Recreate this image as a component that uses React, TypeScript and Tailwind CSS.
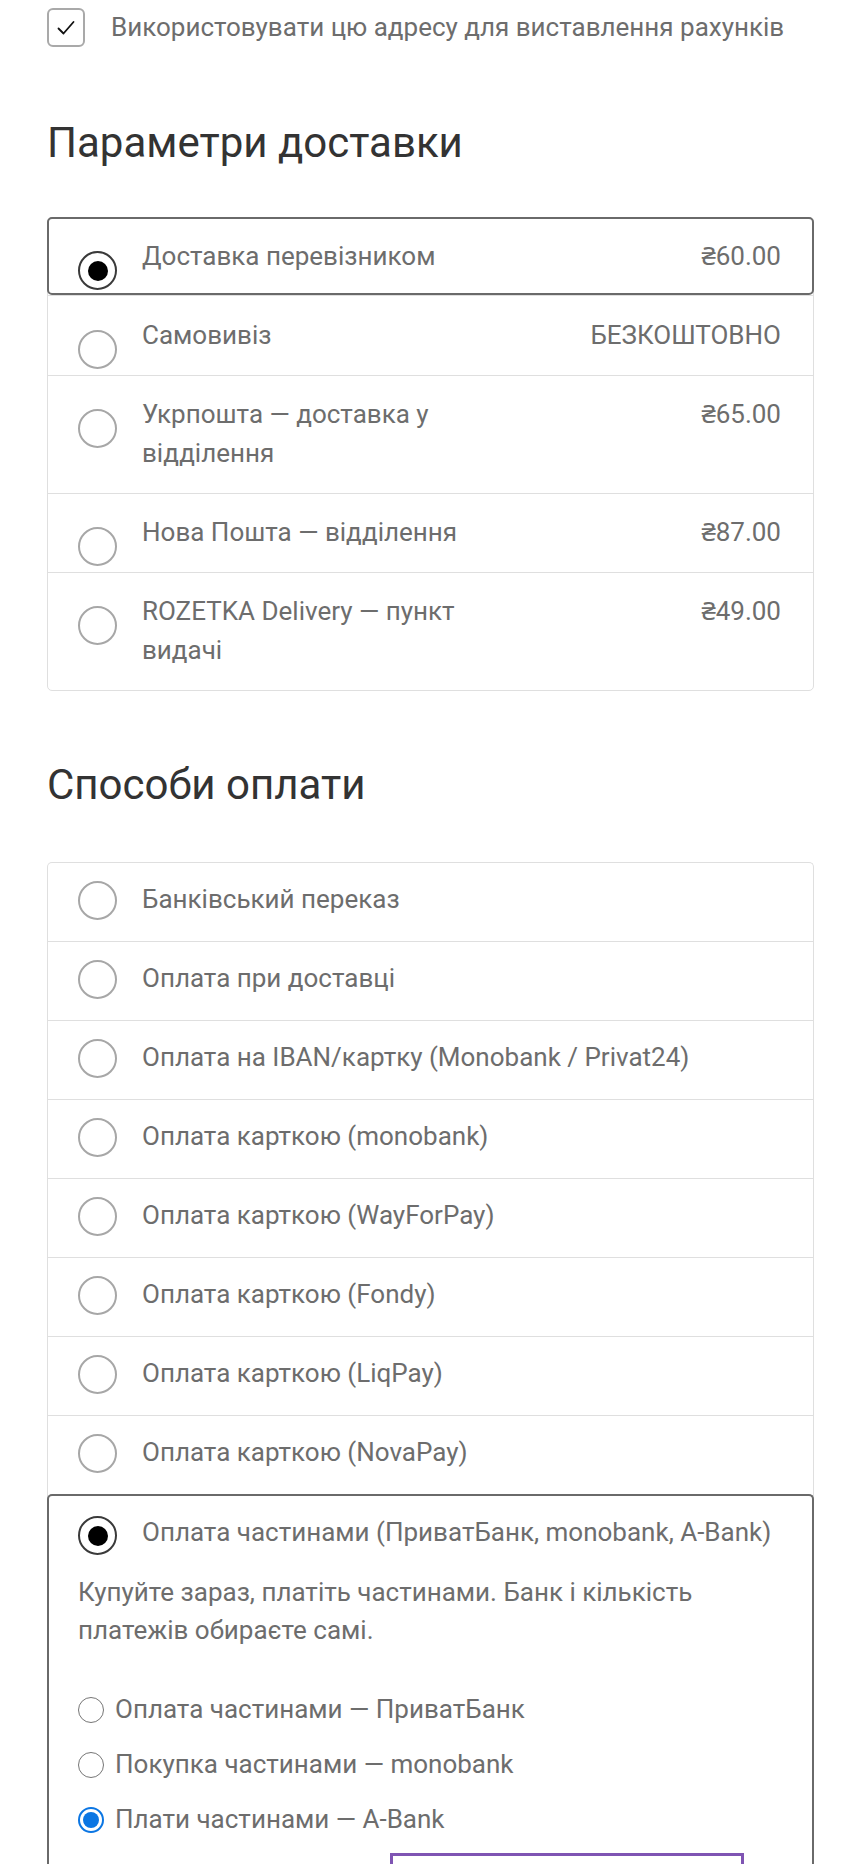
import type { ReactNode } from "react";

const font = { fontFamily: "Roboto, 'Noto Sans', sans-serif" };

interface ShippingOption {
  label: string;
  price: string;
  selected?: boolean;
}

const shipping: ShippingOption[] = [
  { label: "Доставка перевізником", price: "₴60.00", selected: true },
  { label: "Самовивіз", price: "БЕЗКОШТОВНО" },
  { label: "Укрпошта — доставка у відділення", price: "₴65.00" },
  { label: "Нова Пошта — відділення", price: "₴87.00" },
  { label: "ROZETKA Delivery — пункт видачі", price: "₴49.00" },
];

const payments = [
  "Банківський переказ",
  "Оплата при доставці",
  "Оплата на IBAN/картку (Monobank / Privat24)",
  "Оплата карткою (monobank)",
  "Оплата карткою (WayForPay)",
  "Оплата карткою (Fondy)",
  "Оплата карткою (LiqPay)",
  "Оплата карткою (NovaPay)",
];

const banks = [
  { label: "Оплата частинами — ПриватБанк", checked: false },
  { label: "Покупка частинами — monobank", checked: false },
  { label: "Плати частинами — A-Bank", checked: true },
];

function Radio({ checked, className = "" }: { checked?: boolean; className?: string }) {
  return checked ? (
    <span className={`flex h-[39px] w-[39px] shrink-0 items-center justify-center rounded-full border-2 border-[#3a3a3a] bg-white ${className}`}>
      <span className="h-[20px] w-[20px] rounded-full bg-black" />
    </span>
  ) : (
    <span className={`block h-[39px] w-[39px] shrink-0 rounded-full border-2 border-[#a7a7a7] bg-white ${className}`} />
  );
}

function SmallRadio({ checked }: { checked?: boolean }) {
  return checked ? (
    <span className="flex h-[26px] w-[26px] shrink-0 items-center justify-center rounded-full border-2 border-[#0b76e3] bg-white">
      <span className="h-[16px] w-[16px] rounded-full bg-[#0b76e3]" />
    </span>
  ) : (
    <span className="block h-[26px] w-[26px] shrink-0 rounded-full border-[1.5px] border-[#767676] bg-white" />
  );
}

function Heading({ children, className = "" }: { children: ReactNode; className?: string }) {
  return (
    <h2 className={`text-[42px] leading-[50px] font-normal text-[#333333] ${className}`}>{children}</h2>
  );
}

export default function App() {
  return (
    <div className="min-h-[1864px] bg-white" style={font}>
      <div className="ml-[47px] w-[767px] pt-2 text-[26px] leading-[39px] text-[#6d6d6d]">
        {/* billing checkbox */}
        <label className="flex items-center gap-[26px]">
          <span className="flex h-[39px] w-[38px] items-center justify-center rounded-[6px] border-2 border-[#a9a9a9]">
            <svg width="22" height="22" viewBox="0 0 22 22" fill="none">
              <path d="M3.5 11.5 L8.5 16.5 L18.5 5" stroke="#111" strokeWidth="1.8" strokeLinecap="round" strokeLinejoin="round" />
            </svg>
          </span>
          <span>Використовувати цю адресу для виставлення рахунків</span>
        </label>

        {/* shipping */}
        <Heading className="mt-[71px] mb-[49px]">Параметри доставки</Heading>
        <ul className="rounded-[5px] border border-[#dfdfdf]">
          {shipping.map((opt, i) => (
            <li
              key={opt.label}
              className={
                opt.selected
                  ? "-mx-px -mt-px flex items-start rounded-[5px] border-2 border-[#6a6a6a] pt-[18px] pr-[31px] pb-[17px] pl-[29px]"
                  : `flex items-start border-t border-[#dfdfdf] ${i === 1 ? "pt-[20px]" : "pt-[19px]"} pr-[32px] pb-[20px] pl-[30px]`
              }
            >
              <Radio checked={opt.selected} className="mt-[14px] -mb-[14px]" />
              <span className="ml-[25px] max-w-[340px]">{opt.label}</span>
              <span className="ml-auto whitespace-nowrap">{opt.price}</span>
            </li>
          ))}
        </ul>

        {/* payment */}
        <Heading className="mt-[69px] mb-[52px]">Способи оплати</Heading>
        <div className="rounded-t-[5px] border border-b-0 border-[#dfdfdf]">
          {payments.map((p, i) => (
            <div
              key={p}
              className={`flex items-start pt-[17px] pr-[32px] pb-[22px] pl-[30px] ${i > 0 ? "border-t border-[#dfdfdf]" : ""}`}
            >
              <Radio className="mt-px -mb-px" />
              <span className="ml-[25px]">{p}</span>
            </div>
          ))}

          <div className="-mx-px rounded-t-[5px] border-2 border-b-0 border-[#6a6a6a] pt-[17px] pr-[30px] pl-[29px]">
            <div className="flex items-start">
              <Radio checked className="mt-[3px] -mb-[3px]" />
              <span className="ml-[25px] whitespace-nowrap">Оплата частинами (ПриватБанк, monobank, A-Bank)</span>
            </div>
            <p className="mt-[21px] leading-[38px]">
              Купуйте зараз, платіть частинами. Банк і кількість
              <br />
              платежів обираєте самі.
            </p>
            <div className="mt-[41px] flex flex-col gap-[16px]">
              {banks.map((b) => (
                <label key={b.label} className="flex items-center gap-[11px]">
                  <SmallRadio checked={b.checked} />
                  <span>{b.label}</span>
                </label>
              ))}
            </div>
            <div className="mt-[14px] ml-[312px] h-[80px] w-[354px] border-[3px] border-[#7f54b3] bg-white" />
          </div>
        </div>
      </div>
    </div>
  );
}
